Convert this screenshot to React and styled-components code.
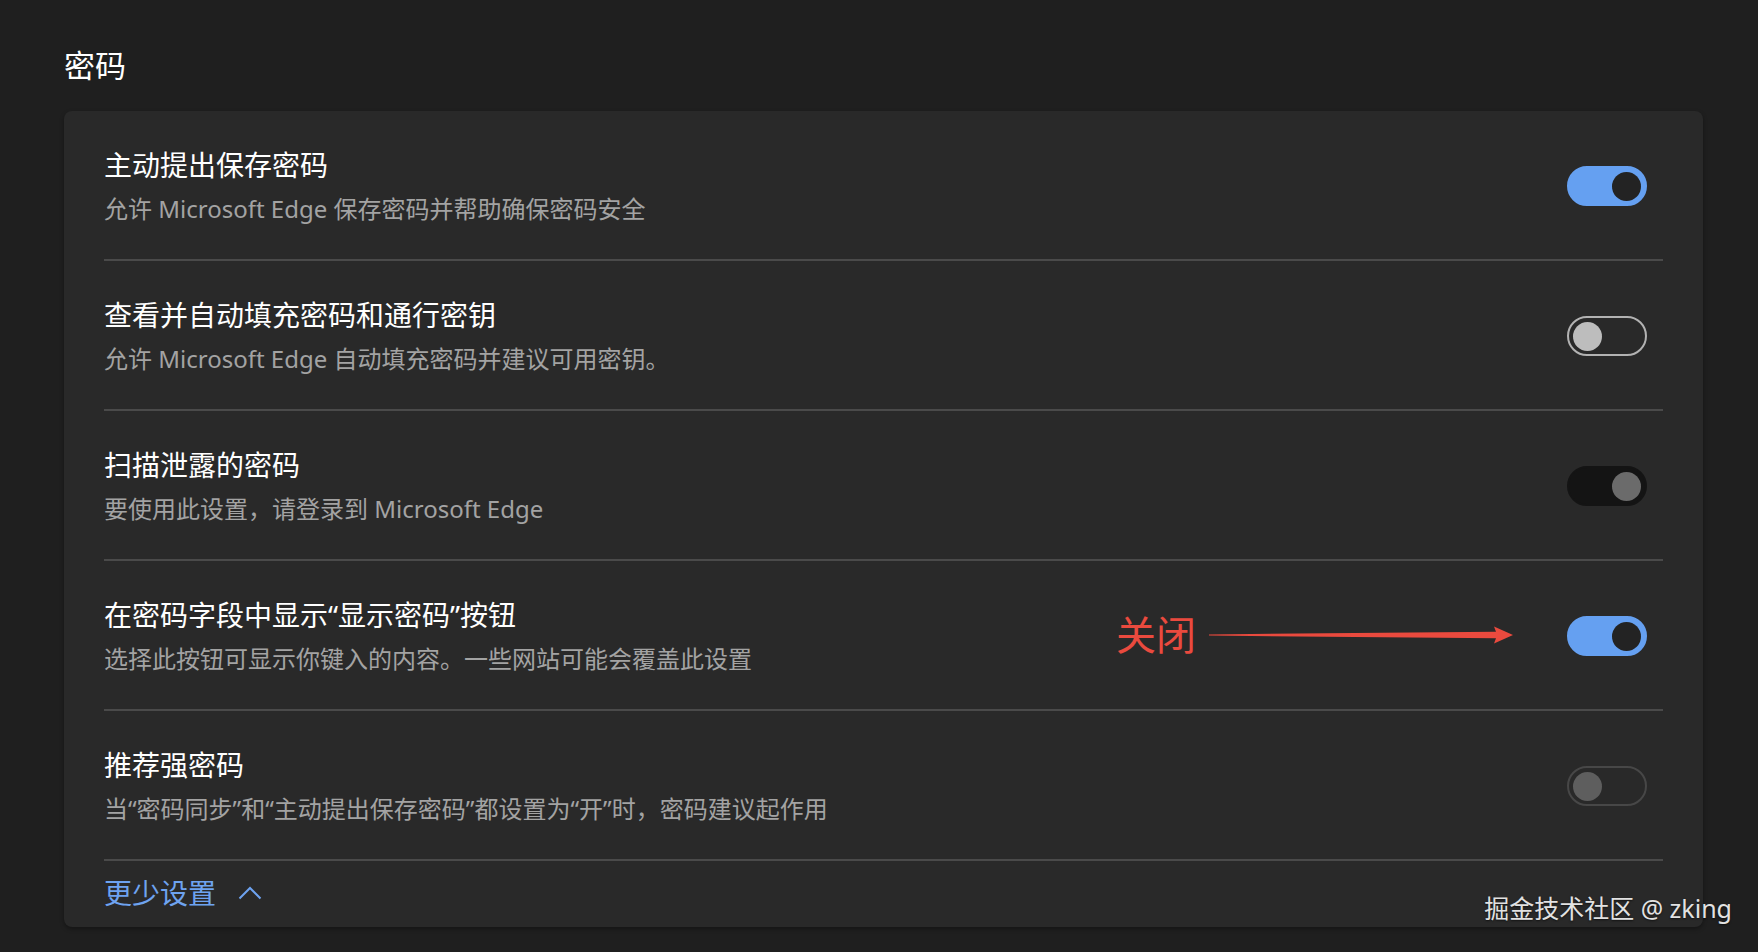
import React from "react";
import styled, { createGlobalStyle } from "styled-components";

const GlobalStyle = createGlobalStyle`
  html, body {
    margin: 0;
    padding: 0;
    background: #1f1f1f;
  }
  body {
    font-family: "Noto Sans", "Noto Sans CJK SC", sans-serif;
    color: #ffffff;
  }
`;

const settings = [
  {
    id: "offer",
    title: "主动提出保存密码",
    desc: "允许 Microsoft Edge 保存密码并帮助确保密码安全",
    on: true,
    disabled: false,
  },
  {
    id: "autofill",
    title: "查看并自动填充密码和通行密钥",
    desc: "允许 Microsoft Edge 自动填充密码并建议可用密钥。",
    on: false,
    disabled: false,
  },
  {
    id: "leak",
    title: "扫描泄露的密码",
    desc: "要使用此设置，请登录到 Microsoft Edge",
    on: true,
    disabled: true,
  },
  {
    id: "reveal",
    title: "在密码字段中显示“显示密码”按钮",
    desc: "选择此按钮可显示你键入的内容。一些网站可能会覆盖此设置",
    on: true,
    disabled: false,
    note: "关闭",
  },
  {
    id: "strong",
    title: "推荐强密码",
    desc: "当“密码同步”和“主动提出保存密码”都设置为“开”时，密码建议起作用",
    on: false,
    disabled: true,
  },
];

export default function App() {
  return (
    <>
      <GlobalStyle />
      <Page>
        <Heading>密码</Heading>
        <Card>
          {settings.map((s) => (
            <Row key={s.id}>
              <TextBlock>
                <Title>{s.title}</Title>
                <Desc>{s.desc}</Desc>
              </TextBlock>
              {s.note && (
                <Note>
                  <NoteText>{s.note}</NoteText>
                  <svg width="304" height="20" viewBox="0 0 304 20">
                    <polygon
                      points="0,9.4 287,6.8 285,1.5 304,10 285,18.5 287,13.2 0,10.6"
                      fill="#ea4a3e"
                    />
                  </svg>
                </Note>
              )}
              <Toggle $on={s.on} $disabled={s.disabled}>
                <Knob $on={s.on} $disabled={s.disabled} />
              </Toggle>
            </Row>
          ))}
          <Footer>
            <MoreLink>更少设置</MoreLink>
            <svg width="24" height="14" viewBox="0 0 24 14">
              <polyline
                points="1.5,12.5 12,2 22.5,12.5"
                fill="none"
                stroke="#6ea3f0"
                strokeWidth="2"
              />
            </svg>
          </Footer>
        </Card>
        <Watermark>掘金技术社区 @ zking</Watermark>
      </Page>
    </>
  );
}

const Page = styled.div`
  position: relative;
  width: 1758px;
  height: 952px;
  box-sizing: border-box;
  padding: 45px 0 0 64px;
  display: flex;
  flex-direction: column;
  gap: 26px;
`;

const Heading = styled.h2`
  margin: 0;
  font-size: 31px;
  line-height: 40px;
  font-weight: 400;
  color: #ffffff;
`;

const Card = styled.div`
  width: 1639px;
  box-sizing: border-box;
  padding: 0 40px 0 40px;
  background: #292929;
  border-radius: 8px;
  box-shadow: 0 2px 4px rgba(0, 0, 0, 0.35);
`;

const Row = styled.div`
  height: 150px;
  box-sizing: border-box;
  border-bottom: 2px solid #4a4a4a;
  display: flex;
  align-items: center;
  padding-top: 2px;
`;

const TextBlock = styled.div`
  flex: 1;
  display: flex;
  flex-direction: column;
  gap: 6px;
`;

const Title = styled.div`
  font-size: 28px;
  line-height: 40px;
  font-weight: 400;
  color: #ffffff;
`;

const Desc = styled.div`
  font-size: 24px;
  line-height: 36px;
  color: #a3a3a3;
`;

const Note = styled.div`
  display: flex;
  align-items: center;
  gap: 13px;
  margin-right: 54px;
  padding-bottom: 2px;
`;

const NoteText = styled.span`
  font-size: 40px;
  line-height: 48px;
  color: #ea4a3e;
`;

const Toggle = styled.div`
  width: 80px;
  height: 40px;
  box-sizing: border-box;
  margin-right: 16px;
  border-radius: 20px;
  padding: 0 4px;
  display: flex;
  align-items: center;
  justify-content: ${(p) => (p.$on ? "flex-end" : "flex-start")};
  border: 2px solid
    ${(p) =>
      p.$on
        ? p.$disabled
          ? "#141414"
          : "#65a0f1"
        : p.$disabled
        ? "#474747"
        : "#b2b2b2"};
  background: ${(p) =>
    p.$on ? (p.$disabled ? "#141414" : "#65a0f1") : "transparent"};
`;

const Knob = styled.div`
  width: 29px;
  height: 29px;
  border-radius: 50%;
  background: ${(p) =>
    p.$on
      ? p.$disabled
        ? "#6b6b6b"
        : "#232323"
      : p.$disabled
      ? "#5e5e5e"
      : "#bdbdbd"};
`;

const Footer = styled.div`
  height: 64px;
  display: flex;
  align-items: center;
  gap: 22px;
  padding-bottom: 2px;
`;

const MoreLink = styled.span`
  font-size: 28px;
  line-height: 40px;
  color: #6ea3f0;
`;

const Watermark = styled.div`
  position: absolute;
  right: 26px;
  bottom: 28px;
  font-size: 25px;
  line-height: 32px;
  color: #e2e2e2;
  text-shadow: 0 1px 2px rgba(0, 0, 0, 0.6);
`;
